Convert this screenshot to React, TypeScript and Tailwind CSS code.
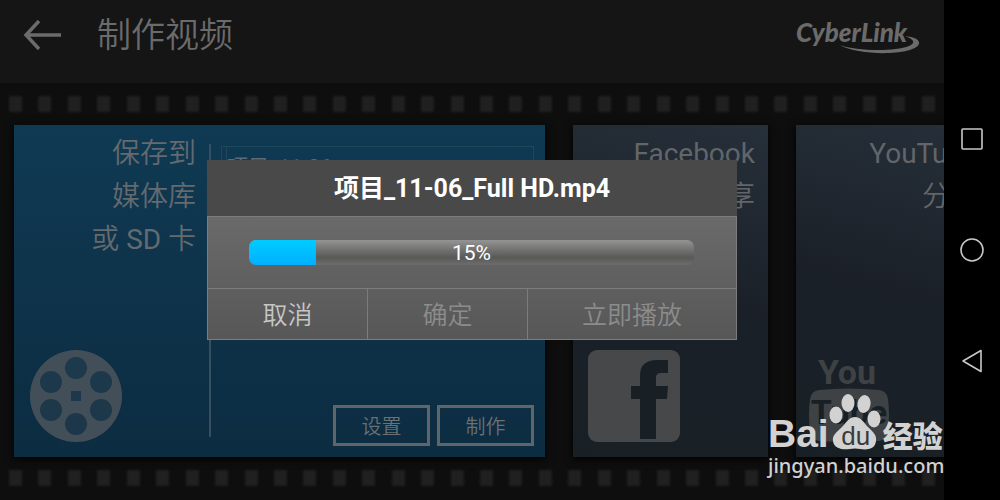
import React, { useState } from "react";

const sans = "font-[Roboto,'Noto_Sans_CJK_SC',sans-serif]";

function FilmHoles() {
  return (
    <div className="flex justify-between px-[9px]">
      {Array.from({ length: 32 }, (_, i) => (
        <span key={i} className="h-4 w-[13px] bg-[#202020] blur-[1px]" />
      ))}
    </div>
  );
}

function CyberLinkLogo() {
  return (
    <div className="relative h-9 w-[124px] text-[#6b6b6b]" aria-label="CyberLink">
      <span className="absolute left-0 top-0 font-[Lato,sans-serif] text-[26px] leading-7 font-black italic">CyberLink</span>
      <svg viewBox="0 0 124 36" className="absolute inset-0 h-9 w-[124px]" fill="currentColor">
        <path d="M44 27C60 33 98 34 113 28C120 25 118 21 109 18C119 19 124 22 123 26C118 38 62 38 44 27Z" />
      </svg>
    </div>
  );
}

function ReelIcon() {
  return (
    <svg viewBox="0 0 92 92" className="size-[92px]" fill="#434f58">
      <mask id="reel">
        <rect width="92" height="92" fill="white" />
        <circle cx="46" cy="18" r="11" />
        <circle cx="46" cy="74" r="11" />
        <circle cx="21" cy="32" r="11" />
        <circle cx="71" cy="32" r="11" />
        <circle cx="21" cy="60" r="11" />
        <circle cx="71" cy="60" r="11" />
        <rect x="41" y="41" width="10" height="10" />
      </mask>
      <circle cx="46" cy="46" r="46" mask="url(#reel)" />
    </svg>
  );
}

function FacebookIcon() {
  return (
    <svg viewBox="0 0 92 92" className="ml-0.5 size-[92px]">
      <rect width="92" height="92" rx="9" fill="#474849" />
      <path
        d="M80 10V23H74C70 23 68 24 68 28V36H80L79 49H68V89H52V49H43V36H52V26C52 15 58 10 69 10Z"
        fill="#182026"
      />
    </svg>
  );
}

function YouTubeIcon() {
  return (
    <svg viewBox="0 0 80 92" className="h-[92px] w-20 font-[Roboto,sans-serif]">
      <text x="38" y="34" textAnchor="middle" fill="#3f4244" className="text-[34px] font-bold">
        You
      </text>
      <path d="M10 40Q40 37 70 40Q78 41 79 49Q81 65 79 81Q78 90 70 91Q40 93 10 91Q2 90 1 81Q-1 65 1 49Q2 41 10 40Z" fill="#3f4244" />
      <text x="40" y="74" textAnchor="middle" fill="#182026" className="text-[34px] font-bold">
        Tube
      </text>
    </svg>
  );
}

function ShareCard({ name, icon }: { name: string; icon: React.ReactNode }) {
  return (
    <section className="flex w-[195px] shrink-0 flex-col justify-between bg-linear-195 from-[#26303a] via-[#1b2028] to-[#182026] px-[13px] pt-[7px] pb-[15px] shadow-[0_2px_8px_#000]">
      <h2 className="text-right text-[28px] leading-[43px] text-[#626569]">
        {name}
        <br />
        <span className="font-[350]">分享</span>
      </h2>
      {icon}
    </section>
  );
}

function SaveCard() {
  const [name, setName] = useState("项目_11-06");
  return (
    <section className="flex flex-1 bg-linear-to-b from-[#0f3a53] to-[#0c2c41] shadow-[0_2px_8px_#000]">
      <div className="flex w-[195px] flex-col justify-between pt-[7px] pr-[13px] pb-[15px] pl-4">
        <h2 className="text-right text-[28px] leading-[43px] font-[350] text-[#646a6e]">
          保存到
          <br />
          媒体库
          <br />或 <span className="font-normal">SD</span> 卡
        </h2>
        <ReelIcon />
      </div>
      <div className="mt-[19px] mb-5 w-0.5 bg-[#36505f]" />
      <div className="flex flex-1 flex-col justify-between pt-[21px] pr-[11px] pb-[11px] pl-2.5">
        <div className="border border-[#1f475d] pl-1">
          <input
            aria-label="文件名"
            value={name}
            onChange={(e) => setName(e.target.value)}
            className="h-9 w-full border-l border-[#1f475d] text-[21px] text-[#5c6c76] outline-none"
          />
        </div>
        <div className="flex justify-end gap-[7px]">
          <button className="h-[41px] w-[97px] border-[3px] border-[#5f6569] pt-0.5 text-xl font-[350] text-[#6a7074]">设置</button>
          <button className="h-[41px] w-[97px] border-[3px] border-[#5f6569] pt-0.5 text-xl font-[350] text-[#6a7074]">制作</button>
        </div>
      </div>
    </section>
  );
}

function ProgressDialog({ percent }: { percent: number }) {
  return (
    <div role="dialog" aria-labelledby="file-title" className="w-[530px] bg-[#494949]">
      <h3 id="file-title" className="pt-[13px] pb-[11px] text-center text-[25px] leading-8 font-bold text-white">
        项目_11-06_Full HD.mp4
      </h3>
      <div className="border border-[#7c7c7c] bg-linear-to-b from-[#6a6a6a] to-[#575757]">
        <div className="py-[23px] pr-[42px] pl-[41px]">
          <div
            role="progressbar"
            aria-valuenow={percent}
            className="relative h-[25px] overflow-hidden rounded-[7px] bg-linear-to-b from-[#949494] via-[#585a57] via-70% to-[#6d6d6d]"
          >
            <div className="h-full bg-linear-to-b from-[#00ccff] to-[#00b0ff]" style={{ width: `${percent}%` }} />
            <span className="absolute inset-0 text-center text-[21px] leading-[26px] text-white">{percent}%</span>
          </div>
        </div>
        <div className="flex h-[51px] border-t border-[#7c7c7c] text-[25px] font-[350]">
          <button className="w-40 border-r border-[#7c7c7c] pt-1 text-[#c6c6c6]">取消</button>
          <button disabled className="w-40 border-r border-[#7c7c7c] pt-1 text-[#8c8c8c]">确定</button>
          <button disabled className="flex-1 pt-1 text-[#8c8c8c]">立即播放</button>
        </div>
      </div>
    </div>
  );
}

function SystemBar() {
  return (
    <nav className="flex w-14 shrink-0 flex-col items-center justify-center gap-[87px] bg-black text-[#c8c8c8]">
      <button aria-label="Recent">
        <svg viewBox="0 0 24 24" className="size-6" fill="none" stroke="currentColor" strokeWidth="1.6">
          <rect x="2" y="2" width="20" height="20" rx="1" />
        </svg>
      </button>
      <button aria-label="Home">
        <svg viewBox="0 0 24 24" className="size-6" fill="none" stroke="currentColor" strokeWidth="1.6">
          <circle cx="12" cy="12" r="11" />
        </svg>
      </button>
      <button aria-label="Back">
        <svg viewBox="0 0 24 24" className="size-6" fill="none" stroke="currentColor" strokeWidth="1.6" strokeLinejoin="round">
          <path d="M21 1.500V22.500L3 12Z" />
        </svg>
      </button>
    </nav>
  );
}

function Watermark() {
  return (
    <div className="pointer-events-none absolute right-[55px] bottom-[22px] w-[177px] text-[#d2d2d2]">
      <div className="flex h-[60px] items-end">
        <span className="font-['Liberation_Sans',sans-serif] text-[39px] leading-10 font-bold">Bai</span>
        <div className="relative h-[60px] w-[54px] shrink-0">
          <svg viewBox="0 0 54 60" className="h-[60px] w-[54px]" fill="currentColor">
            <ellipse cx="7" cy="21" rx="6.500" ry="8.500" />
            <ellipse cx="19" cy="9" rx="6.500" ry="9" />
            <ellipse cx="35" cy="10" rx="6.500" ry="9" transform="rotate(10 35 10)" />
            <ellipse cx="45" cy="25" rx="6.500" ry="8.500" />
            <path d="M26 23C32 23 35 29 39 33C44 38 48 41 47 47C46 56 37 56 31 55Q26 54 21 55C14 56 5 55 4 47C3 41 8 38 13 33C17 29 20 23 26 23Z" />
          </svg>
          <span className="absolute inset-x-0 bottom-1 text-center font-['Liberation_Sans',sans-serif] text-[26px] leading-7 text-[#3a3a3a]">du</span>
        </div>
        <span className="font-['Noto_Sans_CJK_SC',sans-serif] text-[30px] leading-10 font-black whitespace-nowrap">经验</span>
      </div>
      <div className="font-['Noto_Sans',sans-serif] text-xl leading-6 font-medium whitespace-nowrap">jingyan.baidu.com</div>
    </div>
  );
}

export default function App() {
  return (
    <div className={`relative flex min-h-screen overflow-hidden bg-black ${sans}`}>
      <main className="relative flex min-w-0 flex-1 flex-col overflow-hidden bg-[#0e0e0e]">
        <header className="flex h-[83px] items-start justify-between bg-[#151515] pr-6 pl-[23px]">
          <div className="flex items-center gap-9 pt-2.5">
            <button aria-label="返回">
              <svg viewBox="0 0 38 30" className="h-[30px] w-[38px]" fill="none" stroke="#6b6b6b" strokeWidth="3.500">
                <path d="M38 15H3M16 1L3 15L16 29" />
              </svg>
            </button>
            <h1 className="text-[34px] leading-[50px] font-[350] text-[#6b6b6b]">制作视频</h1>
          </div>
          <div className="pt-[18px]">
            <CyberLinkLogo />
          </div>
        </header>
        <div className="flex flex-1 flex-col gap-[13px] pt-[13px] pb-3.5">
          <FilmHoles />
          <div className="-mr-[47px] flex flex-1 gap-7 pl-3.5">
            <SaveCard />
            <ShareCard name="Facebook" icon={<FacebookIcon />} />
            <ShareCard name="YouTube" icon={<YouTubeIcon />} />
          </div>
          <FilmHoles />
        </div>
        <div className="absolute inset-0 flex items-center justify-center">
          <ProgressDialog percent={15} />
        </div>
      </main>
      <SystemBar />
      <Watermark />
    </div>
  );
}
